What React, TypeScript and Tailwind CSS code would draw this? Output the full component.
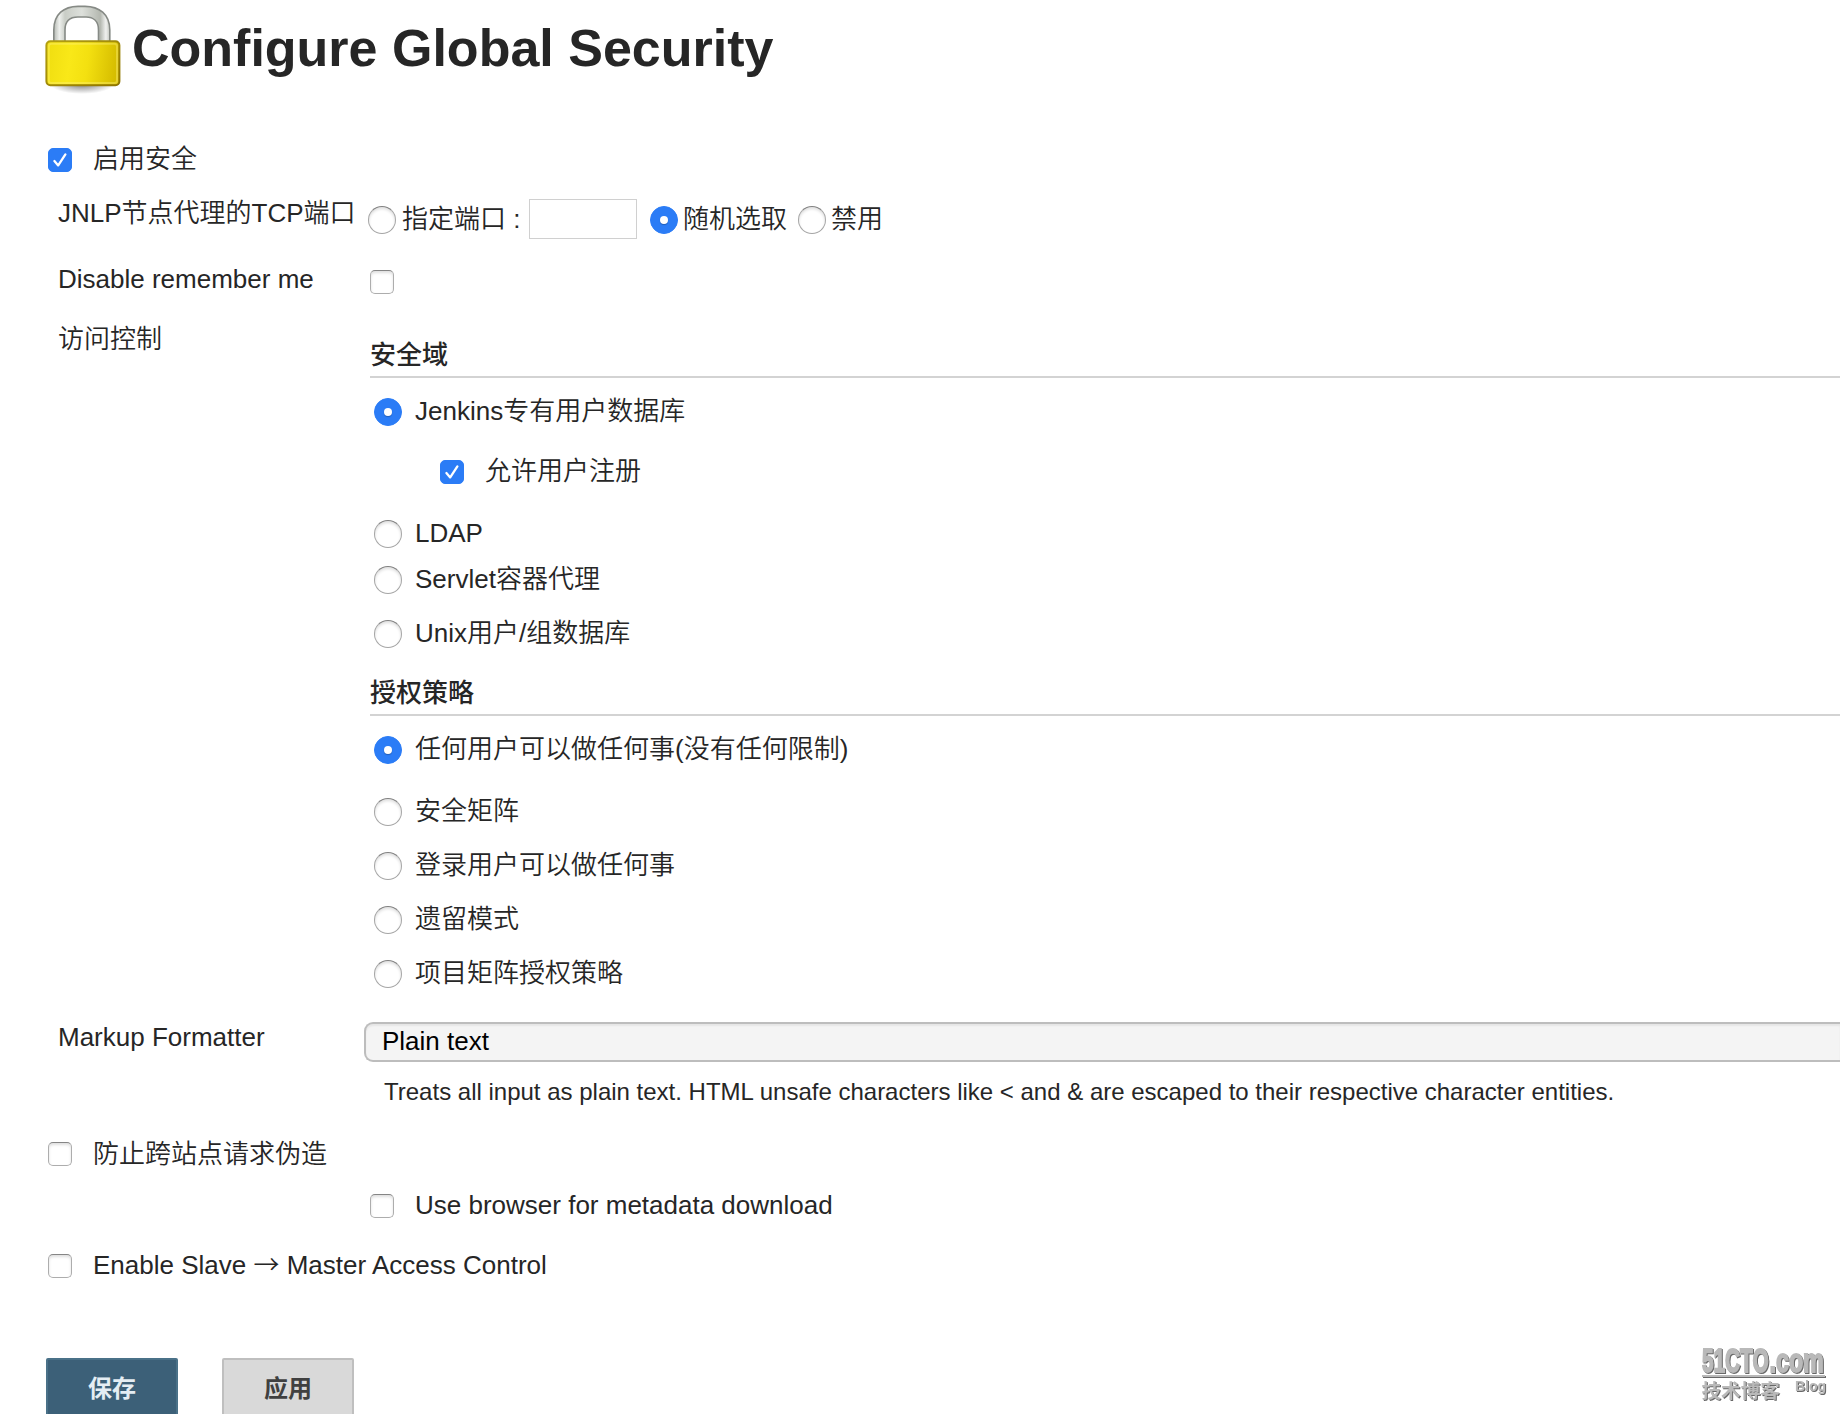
import React from 'react';

interface ControlProps {
  name?: string;
  checked?: boolean;
}

const Checkbox: React.FC<ControlProps> = ({ checked = false }) => (
  <span className="relative block h-6 w-6 shrink-0">
    <input
      type="checkbox"
      defaultChecked={checked}
      className="peer block h-6 w-6 appearance-none rounded-[5px] border border-[#adadad] border-t-[#858585] bg-white shadow-[inset_0_2px_3px_rgba(0,0,0,0.13)] checked:border-[#2b7cf6] checked:bg-[#2b7cf6] checked:shadow-none"
    />
    <svg
      className="pointer-events-none absolute inset-0 hidden h-6 w-6 peer-checked:block"
      viewBox="0 0 24 24"
      fill="none"
      stroke="white"
      strokeWidth={2.3}
      strokeLinecap="round"
      strokeLinejoin="round"
    >
      <path d="M6.4 13 L10.2 17.4 L17.4 6.4" />
    </svg>
  </span>
);

const Radio: React.FC<ControlProps> = ({ name, checked = false }) => (
  <span className="relative block h-7 w-7 shrink-0">
    <input
      type="radio"
      name={name}
      defaultChecked={checked}
      className="peer block h-7 w-7 appearance-none rounded-full border border-[#a6a6a6] border-t-[#808080] bg-white shadow-[inset_0_2px_3px_rgba(0,0,0,0.13)] checked:border-[#2b7cf6] checked:bg-[#2b7cf6] checked:shadow-none"
    />
    <span className="pointer-events-none absolute top-2.5 left-2.5 hidden h-2 w-2 rounded-full bg-white shadow-[0_1px_1px_rgba(0,0,0,0.25)] peer-checked:block" />
  </span>
);

interface OptionProps {
  name: string;
  label: string;
  checked?: boolean;
  className?: string;
}

const RadioOption: React.FC<OptionProps> = ({ name, label, checked, className = '' }) => (
  <label className={`ml-1 flex h-7 items-center gap-[13px] ${className}`}>
    <Radio name={name} checked={checked} />
    <span className="pb-[2px]">{label}</span>
  </label>
);

const SectionTitle: React.FC<{ children: React.ReactNode; className?: string }> = ({ children, className = '' }) => (
  <h2 className={`border-b-2 border-[#d3d3d3] pb-[6px] leading-[30px] font-medium ${className}`}>{children}</h2>
);

const LockIcon = () => (
  <svg className="h-[96px] w-[84px] shrink-0" viewBox="0 0 84 96">
    <defs>
      <linearGradient id="lockBody" x1="0" y1="0" x2="1" y2="0.08">
        <stop offset="0" stopColor="#efdd10" />
        <stop offset="0.35" stopColor="#f9e818" />
        <stop offset="0.6" stopColor="#f3e010" />
        <stop offset="1" stopColor="#d6bd00" />
      </linearGradient>
      <linearGradient id="lockEdge" x1="0" y1="0" x2="1" y2="1">
        <stop offset="0" stopColor="#b3a012" />
        <stop offset="1" stopColor="#8f7500" />
      </linearGradient>
      <linearGradient id="shackle" x1="0" y1="0" x2="1" y2="0">
        <stop offset="0" stopColor="#b4b8b2" />
        <stop offset="0.1" stopColor="#eef0ed" />
        <stop offset="0.2" stopColor="#c9cdc6" />
        <stop offset="0.5" stopColor="#dde0db" />
        <stop offset="0.83" stopColor="#b4b8b0" />
        <stop offset="0.93" stopColor="#f0f1ef" />
        <stop offset="1" stopColor="#c4c8c1" />
      </linearGradient>
      <radialGradient id="lockShadow">
        <stop offset="0" stopColor="#000" stopOpacity="0.5" />
        <stop offset="1" stopColor="#000" stopOpacity="0" />
      </radialGradient>
    </defs>
    <ellipse cx="42" cy="84" rx="32" ry="10" fill="url(#lockShadow)" />
    <path
      d="M13.8 44 V30 C13.8 14 24 6.4 38 6.4 H45 C59 6.4 69.8 14 69.8 30 V44 H58.5 V30 C58.5 21 53 17 46 17 H38 C30 17 25 21 25 30 V44 Z"
      fill="url(#shackle)"
      stroke="#868a85"
      strokeWidth="1.6"
    />
    <rect x="6.4" y="41.3" width="73" height="44" rx="4" fill="url(#lockBody)" stroke="url(#lockEdge)" strokeWidth="2" />
    <rect x="8.8" y="43.7" width="68.2" height="39.2" rx="2.5" fill="none" stroke="#fff27a" strokeOpacity="0.4" strokeWidth="2" />
  </svg>
);

const Watermark = () => (
  <svg
    className="absolute top-[1342px] left-[1698px] h-[64px] w-[132px] overflow-visible drop-shadow-[1.4px_1.4px_0_#686868]"
    viewBox="0 0 132 64"
    fill="#b9b9b9"
    fontFamily="'Liberation Sans', 'Noto Sans CJK SC', sans-serif"
    fontWeight="bold"
  >
    <text transform="translate(4 29.5) scale(0.63 1)" fontSize="33" stroke="#b9b9b9" strokeWidth="1.8">51CTO</text>
    <text transform="translate(71.5 29.5) scale(0.705 1)" fontSize="33" stroke="#b9b9b9" strokeWidth="1.8">.com</text>
    <rect x="4" y="33" width="123" height="2" />
    <text x="3.5" y="55.5" fontSize="19.6">技术博客</text>
    <text x="97" y="49" fontSize="14">Blog</text>
  </svg>
);

const App: React.FC = () => {
  return (
    <div className="relative h-[1414px] w-full overflow-hidden bg-white font-['Liberation_Sans','Noto_Sans_CJK_SC',sans-serif] text-[26px] leading-7 font-[350] whitespace-nowrap text-[#262626]">
      {/* Page title */}
      <header className="flex h-[148px] items-start pl-[40px]">
        <LockIcon />
        <h1 className="ml-2 text-[52px] leading-[96px] font-bold">Configure Global Security</h1>
      </header>

      <label className="ml-12 flex h-6 items-center gap-[21px]">
        <Checkbox checked />
        <span className="pb-[2px]">启用安全</span>
      </label>

      {/* Agent port */}
      <div className="mt-[9px] flex h-[78px]">
        <div className="mt-[18px] ml-[58px] w-[310px]">JNLP节点代理的TCP端口</div>
        <div className="flex items-center">
          <Radio name="port" />
          <span className="ml-[6px] w-[127px] pb-[2px]">指定端口 :</span>
          <input type="text" className="-mt-[2px] h-10 w-[108px] border border-[#d0d0d0] bg-white px-2" />
          <span className="ml-[13px]"><Radio name="port" checked /></span>
          <span className="ml-[5px] w-[115px] pb-[2px]">随机选取</span>
          <Radio name="port" />
          <span className="ml-[5px] pb-[2px]">禁用</span>
        </div>
      </div>

      <div className="flex h-[49px]">
        <div className="mt-[6px] ml-[58px] w-[312px]">Disable remember me</div>
        <div className="mt-[11px]"><Checkbox /></div>
      </div>

      {/* Access control */}
      <div className="flex">
        <div className="mt-[17px] ml-[58px] w-[312px] shrink-0">访问控制</div>
        <div className="flex-1">
          <SectionTitle className="mt-8">安全域</SectionTitle>
          <RadioOption name="realm" label="Jenkins专有用户数据库" checked className="mt-5" />
          <label className="mt-[34px] ml-[70px] flex h-6 items-center gap-[21px]">
            <Checkbox checked />
            <span className="pb-[2px]">允许用户注册</span>
          </label>
          <RadioOption name="realm" label="LDAP" className="mt-9" />
          <RadioOption name="realm" label="Servlet容器代理" className="mt-[18px]" />
          <RadioOption name="realm" label="Unix用户/组数据库" className="mt-[26px]" />

          <SectionTitle className="mt-[30px]">授权策略</SectionTitle>
          <RadioOption name="strategy" label="任何用户可以做任何事(没有任何限制)" checked className="mt-5" />
          <RadioOption name="strategy" label="安全矩阵" className="mt-[34px]" />
          <RadioOption name="strategy" label="登录用户可以做任何事" className="mt-[26px]" />
          <RadioOption name="strategy" label="遗留模式" className="mt-[26px]" />
          <RadioOption name="strategy" label="项目矩阵授权策略" className="mt-[26px]" />
        </div>
      </div>

      {/* Markup formatter, the select runs past the right edge */}
      <div className="mt-[34px] flex h-[120px]">
        <div className="mt-[1px] ml-[58px] w-[306px] shrink-0">Markup Formatter</div>
        <div className="flex-1">
          <div className="flex h-10 items-center rounded-l-[9px] border-2 border-r-0 border-[#bdbdbd] bg-[#f4f4f4] pb-[2px] pl-4 text-black shadow-[inset_0_2px_2px_rgba(0,0,0,0.06)]">
            Plain text
          </div>
          <p className="mt-4 ml-5 text-[24px]">
            Treats all input as plain text. HTML unsafe characters like &lt; and &amp; are escaped to their respective character entities.
          </p>
        </div>
      </div>

      <label className="ml-12 flex h-6 items-center gap-[21px]">
        <Checkbox />
        <span className="pb-px">防止跨站点请求伪造</span>
      </label>
      <label className="mt-7 ml-[370px] flex h-6 items-center gap-[21px]">
        <Checkbox />
        <span className="pb-[2px]">Use browser for metadata download</span>
      </label>
      <label className="mt-9 ml-12 flex h-6 items-center gap-[21px]">
        <Checkbox />
        <span className="pb-1">
          Enable Slave <span className="font-['Noto_Sans_CJK_SC',sans-serif]">→</span> Master Access Control
        </span>
      </label>

      <div className="mt-20 ml-[46px] flex gap-11 text-[24px] font-bold">
        <button className="h-[60px] w-[132px] rounded-t-[2px] border-2 border-[#4a7188] bg-[#3c6078] pt-[2px] text-[#e4edf3]">保存</button>
        <button className="h-[60px] w-[132px] rounded-t-[2px] border-2 border-[#bfbfbf] bg-[#d9d9d9] pt-[2px] text-[#404040]">应用</button>
      </div>

      <Watermark />
    </div>
  );
};

export default App;
